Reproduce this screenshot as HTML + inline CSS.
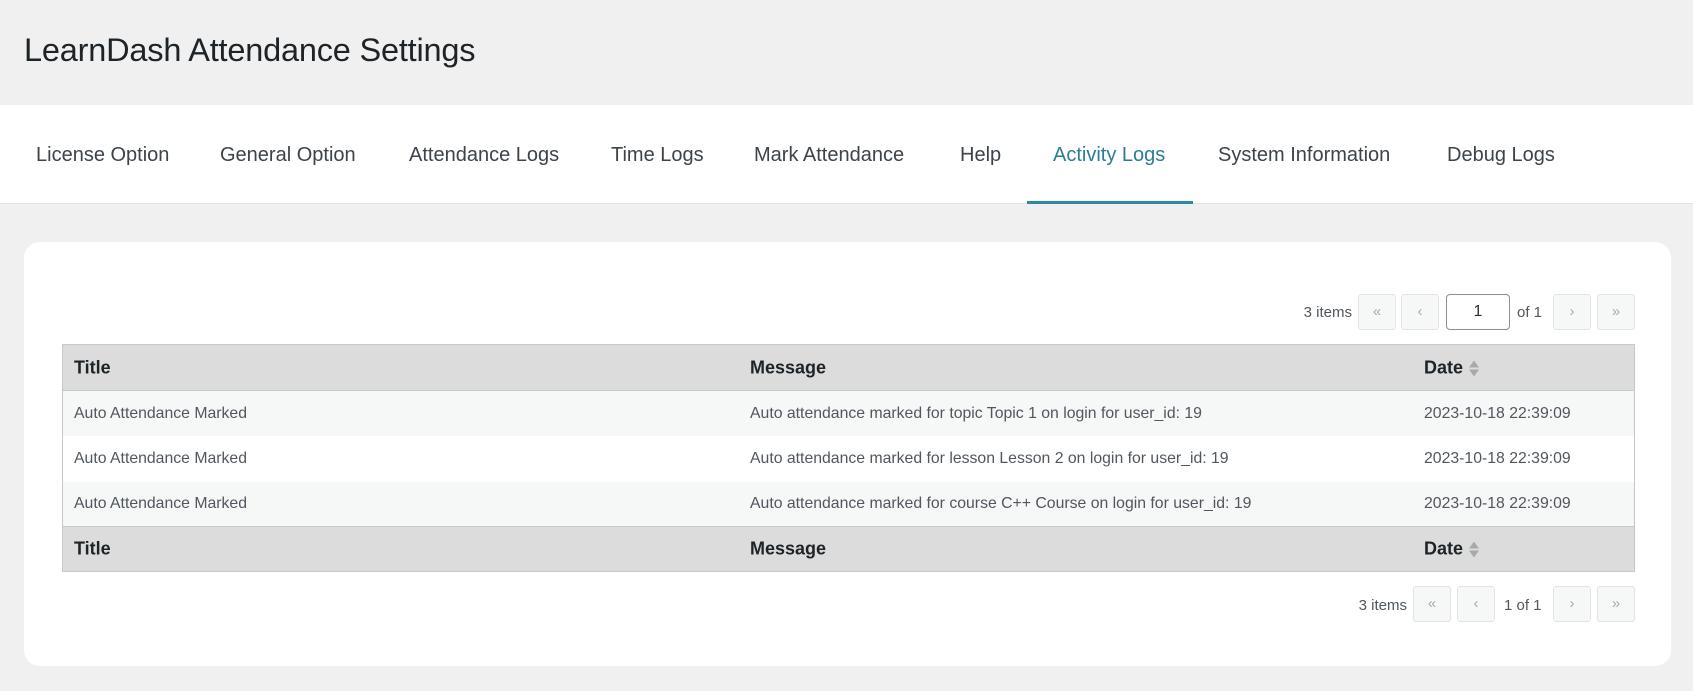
<!DOCTYPE html>
<html><head><meta charset="utf-8"><style>
*{box-sizing:border-box;margin:0;padding:0}
body{width:1693px;height:691px;background:#f0f0f1;font-family:"Liberation Sans",sans-serif;position:relative;overflow:hidden;color:#1d2327}
h1{position:absolute;left:24px;top:32px;font-size:32.5px;font-weight:400;color:#1d2327;letter-spacing:-0.2px}
.tabs{position:absolute;left:0;top:105px;width:1693px;height:99px;background:#fff;border-bottom:1px solid #e4e4e4}
.tab{position:absolute;top:39px;font-size:20px;color:#3c434a}
.tab.act{color:#2b7d96}
.ul{position:absolute;left:1027px;top:96px;width:166px;height:3px;background:#2b8aa5}
.card{position:absolute;left:24px;top:242px;width:1647px;height:424px;background:#fff;border-radius:16px}
.btn{position:absolute;width:38px;height:36px;border:1px solid #e2e4e7;border-radius:3px;background:#f6f7f7;color:#a7aaad;font-size:15px;text-align:center;line-height:34px}
.txt{position:absolute;font-size:15px;color:#50575e;white-space:nowrap}
.row{position:absolute;left:62px;width:1573px;font-size:15.8px;color:#50575e}
.row span{position:absolute;top:50%;transform:translateY(-50%);white-space:nowrap}
.hd{background:#dcdcdc;color:#1d2327;font-size:18px;font-weight:bold;border-top:1px solid #c8c8c8;border-bottom:1px solid #c8c8c8}
.c1{left:12px}.c2{left:688px}.c3{left:1362px}
.arr{display:inline-block;vertical-align:middle;margin-left:6px;width:10px;height:18px;position:relative}
.arr:before{content:"";position:absolute;left:0;top:1px;border:5px solid transparent;border-bottom:7px solid #a7aaad;border-top:0}
.arr:after{content:"";position:absolute;left:0;top:10px;border:5px solid transparent;border-top:7px solid #a7aaad;border-bottom:0}
</style></head><body>
<h1>LearnDash Attendance Settings</h1>
<div class="tabs">
<span class="tab" style="left:36px">License Option</span>
<span class="tab" style="left:220px">General Option</span>
<span class="tab" style="left:409px">Attendance Logs</span>
<span class="tab" style="left:611px">Time Logs</span>
<span class="tab" style="left:754px">Mark Attendance</span>
<span class="tab" style="left:960px">Help</span>
<span class="tab act" style="left:1053px">Activity Logs</span>
<span class="tab" style="left:1218px">System Information</span>
<span class="tab" style="left:1447px">Debug Logs</span>
<div class="ul"></div>
</div>
<div class="card"></div>
<span class="txt" style="right:341px;top:304px">3 items</span>
<div class="btn" style="left:1358px;top:294px">«</div>
<div class="btn" style="left:1401px;top:294px">‹</div>
<div class="btn" style="left:1446px;top:294px;width:64px;background:#fff;border-color:#8c8f94;border-radius:4px;color:#2c3338;font-size:16px">1</div>
<span class="txt" style="left:1517px;top:304px">of 1</span>
<div class="btn" style="left:1553px;top:294px">›</div>
<div class="btn" style="left:1597px;top:294px">»</div>

<div class="row hd" style="top:344px;height:47px"><span class="c1">Title</span><span class="c2">Message</span><span class="c3">Date<i class="arr"></i></span></div>
<div class="row" style="top:391px;height:45px;background:#f6f7f7"><span class="c1">Auto Attendance Marked</span><span class="c2">Auto attendance marked for topic Topic 1 on login for user_id: 19</span><span class="c3">2023-10-18 22:39:09</span></div>
<div class="row" style="top:436px;height:46px;background:#fff"><span class="c1">Auto Attendance Marked</span><span class="c2">Auto attendance marked for lesson Lesson 2 on login for user_id: 19</span><span class="c3">2023-10-18 22:39:09</span></div>
<div class="row" style="top:482px;height:44px;background:#f6f7f7"><span class="c1">Auto Attendance Marked</span><span class="c2">Auto attendance marked for course C++ Course on login for user_id: 19</span><span class="c3">2023-10-18 22:39:09</span></div>
<div class="row hd" style="top:526px;height:46px"><span class="c1">Title</span><span class="c2">Message</span><span class="c3">Date<i class="arr"></i></span></div>
<div style="position:absolute;left:62px;top:344px;width:1573px;height:228px;border-left:1px solid #c8c8c8;border-right:1px solid #c8c8c8"></div>

<span class="txt" style="right:286px;top:597px">3 items</span>
<div class="btn" style="left:1413px;top:586px">«</div>
<div class="btn" style="left:1457px;top:586px">‹</div>
<span class="txt" style="left:1504px;top:597px">1 of 1</span>
<div class="btn" style="left:1553px;top:586px">›</div>
<div class="btn" style="left:1597px;top:586px">»</div>
</body></html>
